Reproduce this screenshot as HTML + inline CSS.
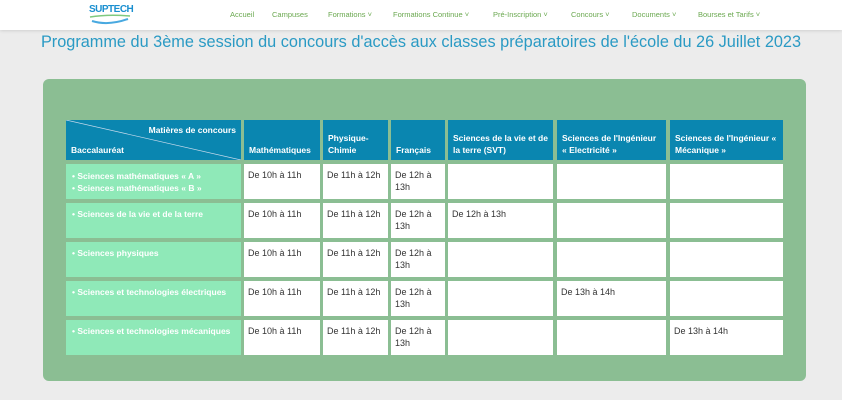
<!DOCTYPE html>
<html><head><meta charset="utf-8"><style>
*{margin:0;padding:0;box-sizing:border-box}
body{width:842px;height:400px;background:#ececec;font-family:"Liberation Sans",sans-serif;position:relative;overflow:hidden}
.hdr{position:absolute;left:0;top:0;width:842px;height:30px;background:#fff;box-shadow:0 1px 3px rgba(0,0,0,.12)}
.nav{position:absolute;top:10px;font-size:7.5px;color:#6aa84f;white-space:nowrap}
h1{position:absolute;left:0;width:842px;top:33px;text-align:center;font-weight:normal;font-size:16.3px;color:#2a9ac4;white-space:nowrap}
.panel{position:absolute;left:43px;top:79px;width:763px;height:302px;background:#8bbe93;border-radius:6px}
.c{position:absolute;font-size:8.5px;padding:5px 6px;line-height:12px}
.h{background:#0a86b0;color:#fff;font-weight:bold;display:flex;align-items:flex-end;padding:0 4px 4px 5px}
.g{background:#8fe9b8;color:#fff;font-weight:bold}
.w{background:#fff;color:#333;font-size:9px;padding:5px 4px}
</style></head><body>
<div class="hdr">
<div style="position:absolute;left:89px;top:4px;font-size:10px;font-weight:bold;color:#1a8fd0;letter-spacing:-0.5px">SUPTECH</div>
<svg style="position:absolute;left:88px;top:14px" width="44" height="12"><path d="M2 3 Q20 0 42 2" stroke="#7fc97f" stroke-width="1.5" fill="none"/><path d="M4 7 Q20 12 40 5" stroke="#49a9e0" stroke-width="2" fill="none"/></svg>
<span class="nav" style="left:230px">Accueil</span>
<span class="nav" style="left:272px">Campuses</span>
<span class="nav" style="left:328px">Formations ˅</span>
<span class="nav" style="left:393px">Formations Continue ˅</span>
<span class="nav" style="left:493px">Pré-Inscription ˅</span>
<span class="nav" style="left:571px">Concours ˅</span>
<span class="nav" style="left:632px">Documents ˅</span>
<span class="nav" style="left:698px">Bourses et Tarifs ˅</span>
</div>
<h1>Programme du 3ème session du concours d'accès aux classes préparatoires de l'école du 26 Juillet 2023</h1>
<div class="panel"></div>

<div class="c h" style="left:66px;top:120px;width:175px;height:40px">Baccalauréat</div>
<svg style="position:absolute;left:66px;top:120px" width="175" height="40"><line x1="0" y1="0" x2="175" y2="40" stroke="#cde" stroke-width="0.7"/></svg>
<div style="position:absolute;left:140px;top:125px;width:96px;text-align:right;font-size:8.5px;color:#fff;font-weight:bold">Matières de concours</div>
<div class="c h" style="left:244px;top:120px;width:76px;height:40px">Mathématiques</div>
<div class="c h" style="left:323px;top:120px;width:65px;height:40px">Physique-<br>Chimie</div>
<div class="c h" style="left:391px;top:120px;width:54px;height:40px">Français</div>
<div class="c h" style="left:448px;top:120px;width:105px;height:40px">Sciences de la vie et de la terre (SVT)</div>
<div class="c h" style="left:557px;top:120px;width:109px;height:40px">Sciences de l'Ingénieur « Electricité »</div>
<div class="c h" style="left:670px;top:120px;width:113px;height:40px">Sciences de l'Ingénieur « Mécanique »</div>

<div class="c g" style="left:66px;top:164px;width:175px;height:35px;padding-top:6px">• Sciences mathématiques « A »<br>• Sciences mathématiques « B »</div>
<div class="c g" style="left:66px;top:203px;width:175px;height:35px">• Sciences de la vie et de la terre</div>
<div class="c g" style="left:66px;top:242px;width:175px;height:35px">• Sciences physiques</div>
<div class="c g" style="left:66px;top:281px;width:175px;height:35px">• Sciences et technologies électriques</div>
<div class="c g" style="left:66px;top:320px;width:175px;height:35px">• Sciences et technologies mécaniques</div>

<div class="c w" style="left:244px;top:164px;width:76px;height:35px">De 10h à 11h</div>
<div class="c w" style="left:323px;top:164px;width:65px;height:35px">De 11h à 12h</div>
<div class="c w" style="left:391px;top:164px;width:54px;height:35px">De 12h à 13h</div>
<div class="c w" style="left:448px;top:164px;width:105px;height:35px"></div>
<div class="c w" style="left:557px;top:164px;width:109px;height:35px"></div>
<div class="c w" style="left:670px;top:164px;width:113px;height:35px"></div>

<div class="c w" style="left:244px;top:203px;width:76px;height:35px">De 10h à 11h</div>
<div class="c w" style="left:323px;top:203px;width:65px;height:35px">De 11h à 12h</div>
<div class="c w" style="left:391px;top:203px;width:54px;height:35px">De 12h à 13h</div>
<div class="c w" style="left:448px;top:203px;width:105px;height:35px">De 12h à 13h</div>
<div class="c w" style="left:557px;top:203px;width:109px;height:35px"></div>
<div class="c w" style="left:670px;top:203px;width:113px;height:35px"></div>

<div class="c w" style="left:244px;top:242px;width:76px;height:35px">De 10h à 11h</div>
<div class="c w" style="left:323px;top:242px;width:65px;height:35px">De 11h à 12h</div>
<div class="c w" style="left:391px;top:242px;width:54px;height:35px">De 12h à 13h</div>
<div class="c w" style="left:448px;top:242px;width:105px;height:35px"></div>
<div class="c w" style="left:557px;top:242px;width:109px;height:35px"></div>
<div class="c w" style="left:670px;top:242px;width:113px;height:35px"></div>

<div class="c w" style="left:244px;top:281px;width:76px;height:35px">De 10h à 11h</div>
<div class="c w" style="left:323px;top:281px;width:65px;height:35px">De 11h à 12h</div>
<div class="c w" style="left:391px;top:281px;width:54px;height:35px">De 12h à 13h</div>
<div class="c w" style="left:448px;top:281px;width:105px;height:35px"></div>
<div class="c w" style="left:557px;top:281px;width:109px;height:35px">De 13h à 14h</div>
<div class="c w" style="left:670px;top:281px;width:113px;height:35px"></div>

<div class="c w" style="left:244px;top:320px;width:76px;height:35px">De 10h à 11h</div>
<div class="c w" style="left:323px;top:320px;width:65px;height:35px">De 11h à 12h</div>
<div class="c w" style="left:391px;top:320px;width:54px;height:35px">De 12h à 13h</div>
<div class="c w" style="left:448px;top:320px;width:105px;height:35px"></div>
<div class="c w" style="left:557px;top:320px;width:109px;height:35px"></div>
<div class="c w" style="left:670px;top:320px;width:113px;height:35px">De 13h à 14h</div>
</body></html>
